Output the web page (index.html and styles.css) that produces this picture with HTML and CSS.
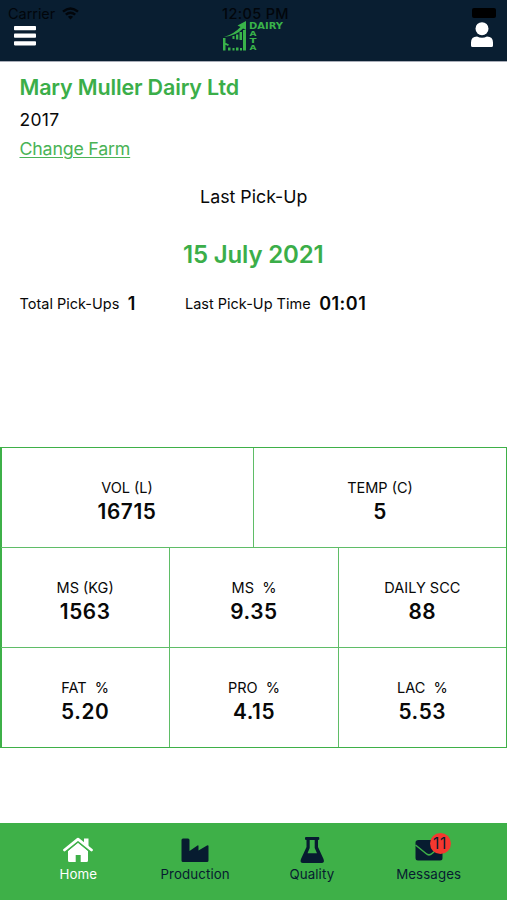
FILE: index.html
```html
<!DOCTYPE html>
<html lang="en">
<head>
<meta charset="utf-8">
<title>Dairy Data</title>
<link rel="stylesheet" href="styles.css">
</head>
<body>
<header class="header">
  <div class="status"><span class="carrier">Carrier</span>
    <svg class="wifi" width="17" height="13" viewBox="0 0 17 13" fill="none" stroke="#02060b" stroke-width="2.4"><path d="M1 4.6Q8.5-1.8 16 4.6M3.8 7.6Q8.5 3.7 13.2 7.6"/><path d="M5.9 9.7Q8.5 7.8 11.1 9.7L8.5 12.5Z" fill="#02060b" stroke="none"/></svg>
    <span class="clock">12:05 PM</span><span class="battery"></span>
  </div>
  <svg class="menu" width="22" height="20" viewBox="0 0 22 20" fill="#fff"><rect width="22" height="4.2" rx=".8"/><rect y="7.6" width="22" height="4.2" rx=".8"/><rect y="15.2" width="22" height="4.2" rx=".8"/></svg>
  <div class="logo">
    <svg width="64" height="32" viewBox="0 0 64 32" fill="#39b34a"><path d="M2 17Q12 14 18.500 7L15.500 5.500 24 1V10L21 8.500Q14 16 2 17Z"/><path d="M1 18h2.500v12.500H1zM6 27.500h2.500v3H6zM10.500 28h2v2.500h-2zM14 27.500h2.500v3H14zM18 28h2v2.500h-2zM21 10h3v20.500H21zM17.500 12h2.500v8h-2.500zM14 14.500h2.300v5H14zM10.500 16h2v3h-2zM2 22l5 2.500-1 1.500-4-2z"/><text x="27" y="8.800" textLength="34" lengthAdjust="spacingAndGlyphs">DAIRY</text><g class="down"><text x="27.500" y="16.300" textLength="7" lengthAdjust="spacingAndGlyphs">A</text><text x="27.500" y="23.300" textLength="7" lengthAdjust="spacingAndGlyphs">T</text><text x="27.500" y="30.300" textLength="7" lengthAdjust="spacingAndGlyphs">A</text></g></svg>
  </div>
  <svg class="user" width="22" height="26" viewBox="0 0 22 26" fill="#fff"><circle cx="11" cy="6.700" r="6.500"/><path d="M0 25V20.500Q0 14.500 6 14.500Q11 17 16 14.500Q22 14.500 22 20.500V23.500Q22 25 20.500 25H1.500Q0 25 0 23.500Z"/></svg>
</header>
<main class="main">
  <section class="farm">
    <h1 class="name"><span>Mary Muller Dairy Ltd</span></h1>
    <div class="year"><span>2017</span></div>
    <a class="change"><span>Change Farm</span></a>
    <h2 class="last">Last Pick-Up</h2>
    <div class="date">15 July 2021</div>
    <div class="stats">
      <div class="stat total"><span class="stat-label">Total Pick-Ups</span><b>1</b></div>
      <div class="stat"><span class="stat-label">Last Pick-Up Time</span><b>01:01</b></div>
    </div>
  </section>
  <section class="metrics">
    <div class="row two"><div class="cell"><span>VOL (L)</span><b>16715</b></div><div class="cell"><span>TEMP (C)</span><b>5</b></div></div>
    <div class="row"><div class="cell"><span>MS (KG)</span><b>1563</b></div><div class="cell"><span>MS&nbsp; %</span><b>9.35</b></div><div class="cell"><span>DAILY SCC</span><b>88</b></div></div>
    <div class="row"><div class="cell"><span>FAT&nbsp; %</span><b>5.20</b></div><div class="cell"><span>PRO&nbsp; %</span><b>4.15</b></div><div class="cell"><span>LAC&nbsp; %</span><b>5.53</b></div></div>
  </section>
</main>
<nav class="tabs">
  <a class="tab active"><svg width="30" height="26" viewBox="0 0 30 26" fill="currentColor"><path d="M15 5.500 25 14V23.500Q25 25 23.500 25H17.700V18H12.700V25H6.500Q5 25 5 23.500V14Z"/><path d="M21 1.500h4.500V11L21 7Z"/><path d="M1.500 13 15 2.200 28.500 13" transform="translate(0 2.700)" fill="none" stroke="#3eb048" stroke-width="1.300"/><path d="M1.500 13 15 2.200 28.500 13" fill="none" stroke="currentColor" stroke-width="2.800" stroke-linecap="round" stroke-linejoin="round"/></svg><span>Home</span></a>
  <a class="tab"><svg width="30" height="26" viewBox="0 0 30 26" fill="currentColor"><path d="M1.500 3Q1.500 1.500 3 1.500H8Q9.500 1.500 9.500 3V14L17.500 8.500Q18.500 8 18.500 9.200V13.500L27 8.500Q28.500 7.700 28.500 9.200V23.500Q28.500 25 27 25H3Q1.500 25 1.500 23.500Z"/></svg><span>Production</span></a>
  <a class="tab"><svg width="30" height="26" viewBox="0 0 30 26" fill="currentColor"><path fill-rule="evenodd" d="M9 0H21.500Q22.300 0 22.300 1V2.200Q22.300 3 21 3V10L26.500 22Q28 26 24.500 26H6Q2.500 26 4 22L9.500 10V3Q8 3 8 2.200V1Q8 0 9 0ZM12.700 3V11L10.500 16.200H20L17.700 11V3Z"/></svg><span>Quality</span></a>
  <a class="tab"><span class="mail"><svg width="30" height="26" viewBox="0 0 30 26" fill="currentColor"><path d="M4.500 3H26Q28.500 3 28.500 5.500V21Q28.500 23.500 26 23.500H4Q1.500 23.500 1.500 21V5.500Q1.500 3 4.500 3Z"/><path d="M1.500 8 12 16.500Q15 19.300 18 16.500L28.500 8" fill="none" stroke="#3eb048" stroke-width="1.500"/></svg><i class="badge">11</i></span><span>Messages</span></a>
</nav>
</body>
</html>
```
FILE: styles.css
```css
* { box-sizing: border-box; }
body {
  margin: 0;
  width: 507px;
  height: 900px;
  display: flex;
  flex-direction: column;
  overflow: hidden;
  background: #fff;
  color: #080808;
  font-family: Inter, "Liberation Sans", sans-serif;
}
.header {
  position: relative;
  flex: none;
  height: 62px;
  padding: 20px 14px 0;
  display: flex;
  justify-content: space-between;
  align-items: flex-start;
  background: #091e31;
  border-bottom: 1px solid #a9adb8;
}
.status { position: absolute; inset: 0 0 auto; height: 27px; color: #02060b; font-size: 14.5px; line-height: 27px; }
.carrier { position: absolute; left: 8px; letter-spacing: -.05px; }
.wifi { position: absolute; left: 62px; top: 7px; }
.clock { position: absolute; left: 0; right: 0; padding-left: 4px; text-align: center; font-weight: 500; font-size: 14.5px; letter-spacing: .35px; }
.battery { position: absolute; left: 472px; top: 8px; width: 24px; height: 10px; background: #000; border-radius: 2px; }
.menu { margin-top: 6px; }
.logo { height: 32px; position: relative; }
.logo text { font: bold 8.5px "DejaVu Sans", sans-serif; }
.logo .down text { font-size: 7px; }
.user { margin-top: 2px; }
.main { flex: 1; display: flex; flex-direction: column; }
.farm { height: 385px; padding: 12px 20px 0 19.5px; }
.name, .last { margin: 0; }
.name { height: 27px; line-height: 27px; font-size: 21.5px; font-weight: 600; letter-spacing: -.16px; color: #3bae49; }
.year { margin-top: 6px; height: 26px; line-height: 26px; font-size: 17.5px; letter-spacing: .3px; }
.change { display: block; margin-top: 3px; height: 26px; line-height: 26px; font-size: 17.8px; letter-spacing: -.2px; color: #4ab356; text-decoration: underline; text-decoration-thickness: 1px; text-underline-offset: 2px; }
.last { margin-top: 22px; padding-left: 1px; line-height: 26px; font-size: 17.8px; font-weight: 400; text-align: center; }
.date { margin-top: 30px; line-height: 30px; font-size: 24px; font-weight: 600; letter-spacing: -.15px; text-align: center; color: #3bae49; }
.stats { display: flex; margin-top: 22px; line-height: 24px; }
.stat { display: flex; align-items: center; gap: 8.5px; }
.stat.total { width: 165.5px; }
.stat-label { font-size: 14.5px; }
.stat b { font-size: 18px; font-weight: 600; letter-spacing: .5px; }
.metrics { height: 301px; border: 1px solid #3eb048; border-left-width: 2px; display: flex; flex-direction: column; }
.row { height: 100px; margin-left: -1px; display: grid; grid-template-columns: repeat(3, 1fr); }
.row + .row { border-top: 1px solid #5fbd67; }
.row.two { height: 99px; grid-template-columns: 252px 1fr; }
.cell { display: flex; flex-direction: column; align-items: center; padding-top: 29px; }
.cell + .cell { border-left: 1px solid #5fbd67; }
.cell span { font-size: 14.5px; line-height: 22px; }
.cell b { font-size: 20.8px; line-height: 26px; font-weight: 600; letter-spacing: .6px; }
.tabs { flex: none; height: 77px; padding: 0 20px; display: grid; grid-template-columns: repeat(4, 1fr); background: #3eb048; color: #071c30; }
.tab { display: flex; flex-direction: column; align-items: center; padding-top: 14px; font-size: 13.3px; line-height: 20px; letter-spacing: .1px; }
.tab svg { display: block; }
.tab > span:last-child { margin-top: 1px; }
.active { color: #fff; }
.mail { position: relative; }
.badge { position: absolute; left: 16px; top: -4px; width: 21px; height: 21px; border-radius: 50%; background: #f5382f; color: #071c30; font-style: normal; font-size: 15.5px; line-height: 21px; text-align: center; letter-spacing: .8px; }
```
